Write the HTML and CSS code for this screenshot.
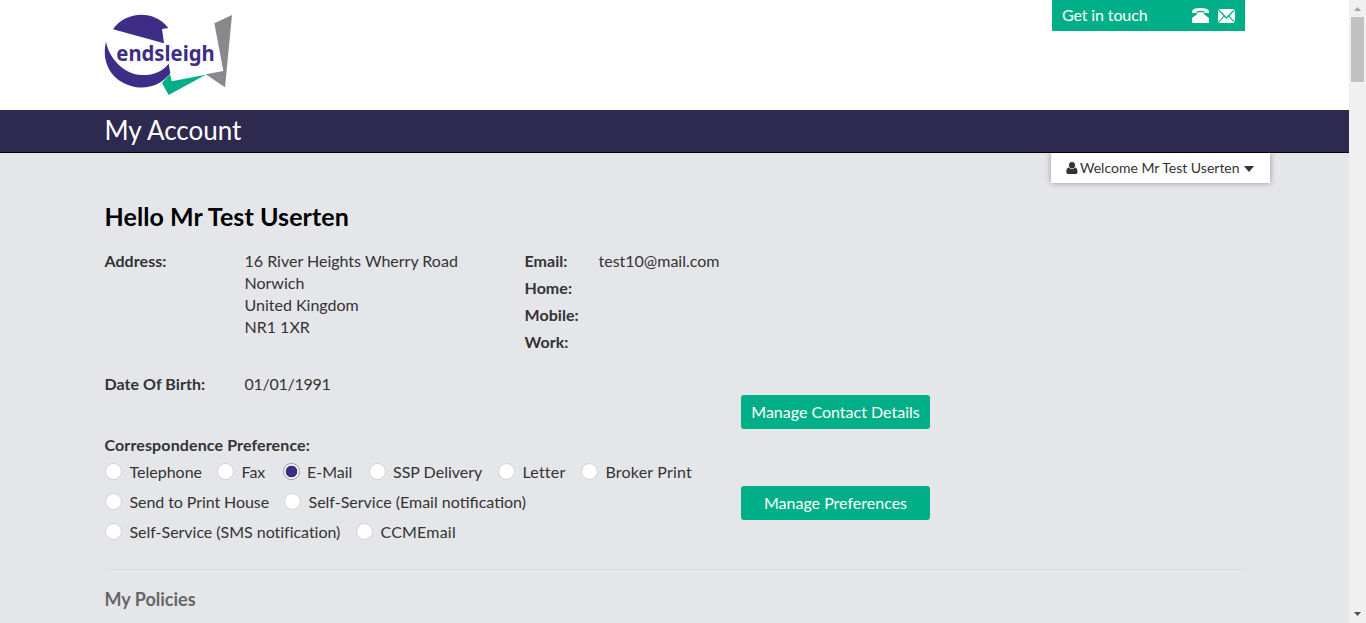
FILE: index.html
```html
<!DOCTYPE html>
<html lang="en">
<head>
<meta charset="utf-8">
<title>My Account</title>
<link rel="stylesheet" href="styles.css">
</head>
<body>
<div class="page">
  <header class="header">
    <svg class="logo" viewBox="30 30 381 240" role="img" aria-label="endsleigh">
      <path fill="#3d2d87" d="M54 73C90 20 175 11 220 69L201 72L207 115Z"/>
      <path fill="#3d2d87" d="M33 110C42 160 88 208 140 210C175 211 202 200 221 176L226 205C194 246 145 257 99 240C42 218 20 165 33 110Z"/>
      <path fill="#00ae87" d="M201 234L225 206L230 229L332 209L221 270Z"/>
      <path fill="#87898c" d="M358 55L411 30L390 247L332 208L385 198Z"/>
      <text class="logo-text" x="64" y="167" textLength="295" lengthAdjust="spacingAndGlyphs">endsleigh</text>
    </svg>
    <div class="touch">
      <span class="touch-label">Get in touch</span>
      <span class="touch-icons">
        <svg width="17" height="15" viewBox="0 0 17 15"><path fill="#fff" d="M0 5V3.200Q1 0 8.500 0T17 3.200V5H12.500V3.300Q8.500 2.300 4.500 3.300V5ZM5.500 4.300H11.500L12.300 6.500L17 10V15H0V10L4.700 6.500Z"/></svg>
        <svg width="17" height="14" viewBox="0 0 17 14"><path fill="#fff" d="M.5 0H16.500L8.500 8ZM0 1L5.500 7L0 13ZM17 1V13L11.500 7ZM6.200 7.700L8.500 10L10.800 7.700L16.500 14H.5Z"/></svg>
      </span>
    </div>
  </header>
  <div class="titlebar"><h1>My Account</h1></div>
  <div class="user">
    <svg width="12" height="12" viewBox="0 0 12 12"><ellipse cx="6" cy="3.300" rx="3" ry="3.300"/><path d="M2.700 5.500Q6 9 9.300 5.500Q11.500 6 11.500 10Q11.500 12 10 12H2Q.3 12 .3 10Q.3 6 2.700 5.500Z"/></svg>
    <span>Welcome Mr Test Userten</span>
    <svg class="caret" width="10" height="6" viewBox="0 0 10 6"><path d="M0 0H10L5 6Z"/></svg>
  </div>
  <main class="main">
    <h2>Hello Mr Test Userten</h2>
    <div class="details">
      <b>Address:</b>
      <address>16 River Heights Wherry Road<br>Norwich<br>United Kingdom<br>NR1 1XR</address>
      <dl class="contact">
        <dt>Email:</dt><dd>test10@mail.com</dd>
        <dt>Home:</dt><dd></dd>
        <dt>Mobile:</dt><dd></dd>
        <dt>Work:</dt><dd></dd>
      </dl>
    </div>
    <div class="lower">
      <div class="prefs">
        <div class="birth"><b>Date Of Birth:</b><span class="date">01/01/1991</span></div>
        <b class="pref-title">Correspondence Preference:</b>
        <div class="row row-one"><label><i class="radio"></i>Telephone</label><label><i class="radio"></i>Fax</label><label><i class="radio on"></i>E-Mail</label><label><i class="radio"></i>SSP Delivery</label><label class="wide"><i class="radio"></i>Letter</label><label class="wide"><i class="radio"></i>Broker Print</label></div>
        <div class="row row-two"><label class="tight"><i class="radio"></i>Send to Print House</label><label><i class="radio"></i>Self-Service (Email notification)</label></div>
        <div class="row row-three"><label class="snug"><i class="radio"></i>Self-Service (SMS notification)</label><label class="wide"><i class="radio"></i>CCMEmail</label></div>
      </div>
      <div class="actions"><a class="btn">Manage Contact Details</a><a class="btn">Manage Preferences</a></div>
    </div>
    <h3>My Policies</h3>
  </main>
</div>
<div class="scrollbar">
  <svg width="7" height="4" viewBox="0 0 7 4"><path fill="#a3a3a3" d="M0 4L3.500 0L7 4Z"/></svg>
  <div class="thumb"></div>
  <svg class="down" width="7" height="4" viewBox="0 0 7 4"><path fill="#505050" d="M0 0H7L3.500 4Z"/></svg>
</div>
</body>
</html>
```
FILE: styles.css
```css
* { box-sizing: border-box; }
body {
  margin: 0;
  display: flex;
  height: 623px;
  overflow: hidden;
  background: #e5e6ea;
  color: #333;
  font: 16px/22px Lato, sans-serif;
}
svg { display: block; }
h1, h2, h3, dl, dd { margin: 0; }
b, dt { font-weight: 700; letter-spacing: .05px; }
.page { flex: 1; position: relative; }
.header {
  height: 110px;
  padding: 0 104px 0 105px;
  background: #fff;
  display: flex;
  justify-content: space-between;
  align-items: flex-start;
}
.logo { width: 127px; height: 80px; margin-top: 15px; overflow: visible; }
.logo-text { font: 700 64px "Noto Sans", sans-serif; fill: #3d2d87; }
.touch {
  width: 193px;
  height: 31px;
  padding: 0 10px;
  background: #00ae87;
  color: #fff;
  display: flex;
  align-items: center;
  justify-content: space-between;
}
.touch-label { padding-bottom: 2px; letter-spacing: -.12px; }
.touch-icons { display: flex; gap: 9px; align-items: center; }
.titlebar {
  height: 43px;
  padding-left: 104.500px;
  background: #2e294e;
  border-bottom: 1px solid #000;
}
h1 { color: #fff; font-size: 26px; line-height: 41px; font-weight: 400; }
.user {
  position: absolute;
  top: 153px;
  left: 1051px;
  width: 219px;
  height: 30px;
  padding-left: 15px;
  display: flex;
  align-items: center;
  gap: 2px;
  background: #fff;
  box-shadow: 0 0 6px rgba(0, 0, 0, .35);
  clip-path: inset(0 -10px -10px -10px);
  font-size: 14px;
  white-space: nowrap;
}
.user svg { fill: #333; }
.user .caret { margin: 2px 0 0 2px; }
.main { padding: 48px 104px 0 104.500px; }
h2 { color: #000; font-size: 25px; line-height: 30px; font-weight: 700; letter-spacing: .08px; }
.details {
  display: grid;
  grid-template-columns: 140px 280px 1fr;
  margin-top: 19px;
  height: 123px;
}
address { font-style: normal; }
.contact { display: grid; grid-template-columns: 74px 1fr; grid-auto-rows: 27px; align-content: start; }
.lower { display: flex; height: 197px; border-bottom: 1px solid #dadbdf; }
.prefs { width: 636.500px; }
.birth { display: grid; grid-template-columns: 140px 1fr; height: 61px; }
.date { letter-spacing: -.28px; }
.pref-title { display: block; height: 23px; letter-spacing: .12px; }
.row { display: grid; height: 30px; white-space: nowrap; }
.row-one { grid-template-columns: 112px 65.500px 86px 129.500px 83px auto; }
.row-two { grid-template-columns: 179px auto; }
.row-three { grid-template-columns: 251px auto; }
label { display: flex; gap: 7.500px; line-height: 30px; }
.wide { letter-spacing: .2px; }
.tight { letter-spacing: -.08px; }
.snug { letter-spacing: -.03px; }
.radio {
  width: 17px;
  height: 17px;
  margin: 6px 0 0 .5px;
  border: 1px solid #d0d0d2;
  border-radius: 50%;
  background: #fff;
}
.on { border-color: #999; background: radial-gradient(circle, #3b2d85 5.500px, #fff 6.200px); }
.actions { width: 189px; padding-top: 22px; display: flex; flex-direction: column; gap: 57px; }
.btn {
  height: 34px;
  border-radius: 3px;
  background: #00ae87;
  color: #fff;
  line-height: 34px;
  text-align: center;
  white-space: nowrap;
}
h3 { margin-top: 18px; color: #666; font-size: 18px; line-height: 22px; font-weight: 700; }
.scrollbar { width: 17px; background: #f0f0f0; display: flex; flex-direction: column; align-items: center; padding: 7px 0; }
.thumb { width: 13px; height: 65px; margin-top: 6px; background: #c1c1c1; }
.down { margin-top: auto; }
```
